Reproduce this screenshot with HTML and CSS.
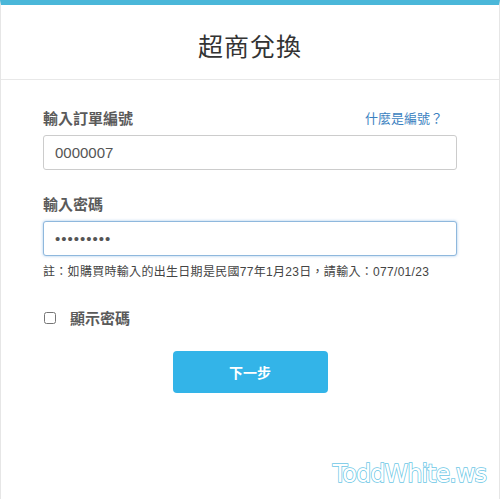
FILE: index.html
```html
<!DOCTYPE html>
<html lang="zh-Hant">
<head>
    <meta charset="UTF-8">
    <meta name="viewport" content="width=device-width, initial-scale=1.0">
    <title>超商兌換</title>
    <link rel="stylesheet" href="styles.css">
</head>
<body>
    <div class="page">
        <header class="header">
            <h1 class="title">超商兌換</h1>
        </header>

        <form class="form">
            <div class="field">
                <div class="label-row">
                    <label class="label" for="order">輸入訂單編號</label>
                    <a class="help-link" href="#">什麼是編號？</a>
                </div>
                <input class="input" id="order" type="text" value="0000007">
            </div>

            <div class="field">
                <div class="label-row">
                    <label class="label" for="pass">輸入密碼</label>
                </div>
                <input class="input focused" id="pass" type="password" value="077/01/23">
                <p class="note">註：如購買時輸入的出生日期是民國77年1月23日，請輸入：077/01/23</p>
            </div>

            <label class="check-row">
                <input class="check" type="checkbox">
                <span>顯示密碼</span>
            </label>

            <div class="actions">
                <button class="next-btn" type="button">下一步</button>
            </div>
        </form>

        <div class="watermark">ToddWhite.ws</div>
    </div>
</body>
</html>
```

FILE: styles.css
```css
* {
    margin: 0;
    padding: 0;
    box-sizing: border-box;
}

body {
    width: 500px;
    height: 499px;
    background: #fff;
    font-family: "Liberation Sans", "Noto Sans CJK TC", sans-serif;
    color: #555;
    overflow: hidden;
}

.page {
    width: 500px;
    height: 499px;
    border-top: 5px solid #4ab7d9;
    border-left: 1px solid #e6e6e6;
    border-right: 1px solid #e6e6e6;
    position: relative;
}

.header {
    height: 75px;
    border-bottom: 1px solid #e8e8e8;
    display: flex;
    align-items: center;
    justify-content: center;
}

.title {
    font-size: 25px;
    font-weight: normal;
    color: #333;
    letter-spacing: 1px;
    padding-top: 5px;
}

.form {
    padding: 26px 42px 0;
    display: flex;
    flex-direction: column;
}

.field {
    margin-bottom: 22px;
}

.field:nth-child(2) {
    margin-bottom: 0;
}

.label-row {
    display: flex;
    justify-content: space-between;
    align-items: center;
    height: 22px;
    margin-bottom: 7px;
}

.label {
    font-size: 15px;
    color: #5a5a5a;
    font-weight: bold;
}

.help-link {
    font-size: 13px;
    color: #3a7fc0;
    text-decoration: none;
    margin-right: 14px;
}

.input {
    display: block;
    width: 100%;
    height: 35px;
    border: 1px solid #ccc;
    border-radius: 3px;
    padding: 0 11px;
    font-family: "Liberation Sans", sans-serif;
    font-size: 15px;
    color: #555;
    outline: none;
}

.input.focused {
    border-color: #8fb8dd;
    box-shadow: 0 0 3px rgba(102, 160, 220, 0.6);
    letter-spacing: 1px;
}

.note {
    font-size: 12px;
    color: #444;
    letter-spacing: 0.3px;
    margin-top: 6px;
}

.check-row {
    display: flex;
    align-items: center;
    gap: 14px;
    margin-top: 28px;
    font-size: 15px;
    font-weight: bold;
    color: #5a5a5a;
}

.check {
    width: 12px;
    height: 12px;
    margin-left: 1px;
}

.actions {
    display: flex;
    justify-content: center;
    margin-top: 23px;
}

.next-btn {
    width: 155px;
    height: 42px;
    border: none;
    border-radius: 4px;
    background: #33b4e8;
    color: #fff;
    font-size: 14px;
    font-weight: bold;
    font-family: "Liberation Sans", "Noto Sans CJK TC", sans-serif;
}

.watermark {
    position: absolute;
    right: 13px;
    bottom: 11px;
    font-family: "DejaVu Sans", sans-serif;
    font-size: 24px;
    color: #fff;
    -webkit-text-stroke: 1.5px #6cc7e6;
    paint-order: stroke fill;
    letter-spacing: -1px;
}
```
